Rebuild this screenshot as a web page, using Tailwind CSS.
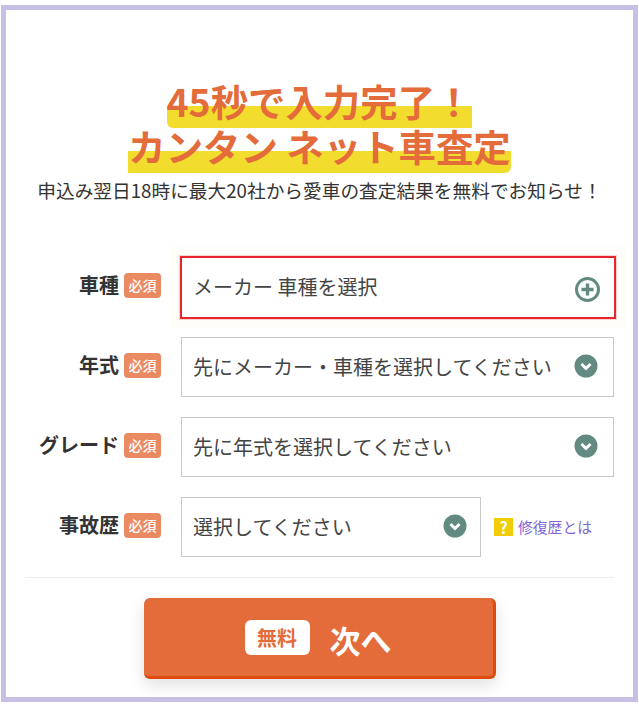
<!DOCTYPE html>
<html lang="ja">
<head>
  <meta charset="UTF-8" />
  <title>カンタン ネット車査定</title>
  <script src="https://cdn.jsdelivr.net/npm/@tailwindcss/browser@4"></script>
</head>
<body class="bg-white font-['Noto_Sans_CJK_JP','Noto_Sans',sans-serif] text-[#333]">

  <div class="ml-px mt-[5px] w-[637px] h-[697px] border-[5px] border-[#c8c0e4] bg-white">

    <!-- Heading -->
    <div class="pt-[69px] flex flex-col items-center">
      <h1 class="text-[37.4px] leading-[45px] font-bold text-[#e36c3a] text-center">
        <span class="bg-[linear-gradient(transparent_59%,#f2dc2e_59%)] rounded-[6px]">45秒で入力完了！<br>カンタン ネット車査定</span>
      </h1>
      <p class="text-[18.7px] leading-[26px] mt-[8px] text-[#333]">申込み翌日18時に最大20社から愛車の査定結果を無料でお知らせ！</p>
    </div>

    <!-- Form -->
    <div class="mt-[54px] flex flex-col gap-5">
      <div class="flex items-center h-[60px]">
        <div class="w-[155px] mb-1 flex justify-end items-center gap-[5px] text-[20px] font-bold">
          <span>車種</span>
          <span class="bg-[#e98a63] text-white text-[14px] leading-[25px] w-[37px] text-center rounded-[4px] font-medium">必須</span>
        </div>
        <div class="ml-[19px] w-[436px] h-[63px] -my-[2px] border-[2px] border-[#e8242c] shadow-[0_0_0_1px_rgba(232,36,44,0.2),0_0_0_10px_rgba(255,250,240,0.3)] flex items-center justify-between pl-[11px] pr-[14px] text-[20px] text-[#444]">
          <span>メーカー 車種を選択</span>
          <svg class="w-[25px] h-[25px] mt-1" viewBox="0 0 25 25" fill="none">
            <circle cx="12.500" cy="12.500" r="11" stroke="#638a80" stroke-width="3"/>
            <path d="M12.500 6.500v12M6.500 12.500h12" stroke="#638a80" stroke-width="3.400"/>
          </svg>
        </div>
      </div>

      <div class="flex items-center h-[60px]">
        <div class="w-[155px] mb-1 flex justify-end items-center gap-[5px] text-[20px] font-bold">
          <span>年式</span>
          <span class="bg-[#e98a63] text-white text-[14px] leading-[25px] w-[37px] text-center rounded-[4px] font-medium">必須</span>
        </div>
        <div class="ml-[20px] w-[433px] h-[60px] border border-[#c8c8c8] flex items-center justify-between pl-[11px] pr-[15px] text-[20px] text-[#444]">
          <span>先にメーカー・車種を選択してください</span>
          <svg class="w-[24px] h-[24px] mb-[2px]" viewBox="0 0 24 24" fill="none">
            <circle cx="12" cy="12" r="11.500" fill="#638a80"/>
            <path d="M7.500 10l4.500 4.500L16.500 10" stroke="#fff" stroke-width="3"/>
          </svg>
        </div>
      </div>

      <div class="flex items-center h-[60px]">
        <div class="w-[155px] mb-1 flex justify-end items-center gap-[5px] text-[20px] font-bold">
          <span>グレード</span>
          <span class="bg-[#e98a63] text-white text-[14px] leading-[25px] w-[37px] text-center rounded-[4px] font-medium">必須</span>
        </div>
        <div class="ml-[20px] w-[433px] h-[60px] border border-[#c8c8c8] flex items-center justify-between pl-[11px] pr-[15px] text-[20px] text-[#444]">
          <span>先に年式を選択してください</span>
          <svg class="w-[24px] h-[24px] mb-[2px]" viewBox="0 0 24 24" fill="none">
            <circle cx="12" cy="12" r="11.500" fill="#638a80"/>
            <path d="M7.500 10l4.500 4.500L16.500 10" stroke="#fff" stroke-width="3"/>
          </svg>
        </div>
      </div>

      <div class="flex items-center h-[60px]">
        <div class="w-[155px] mb-1 flex justify-end items-center gap-[5px] text-[20px] font-bold">
          <span>事故歴</span>
          <span class="bg-[#e98a63] text-white text-[14px] leading-[25px] w-[37px] text-center rounded-[4px] font-medium">必須</span>
        </div>
        <div class="ml-[20px] w-[300px] h-[60px] border border-[#c8c8c8] flex items-center justify-between pl-[11px] pr-[13px] text-[20px] text-[#444]">
          <span>選択してください</span>
          <svg class="w-[24px] h-[24px] mb-[2px]" viewBox="0 0 24 24" fill="none">
            <circle cx="12" cy="12" r="11.500" fill="#638a80"/>
            <path d="M7.500 10l4.500 4.500L16.500 10" stroke="#fff" stroke-width="3"/>
          </svg>
        </div>
        <div class="ml-[13px] flex items-center gap-[5px]">
          <span class="w-[19px] h-[18px] bg-[#f0cc00] text-white text-[16px] leading-[18px] font-bold text-center">?</span>
          <span class="text-[14.800px] text-[#7d68d8]">修復歴とは</span>
        </div>
      </div>
    </div>

    <!-- Footer -->
    <div class="mt-5 mx-[19px] border-t border-[#eeeeee] pt-5 flex justify-center">
      <button class="w-[352px] h-[81px] bg-[#e36c3a] rounded-[6px] border-r-[3px] border-b-[3px] border-[#e04a0a] shadow-[0_6px_16px_rgba(0,0,0,0.12)] flex items-center justify-center gap-5">
        <span class="bg-white text-[#e36c3a] text-[20px] leading-[35px] w-[65px] rounded-[6px] font-bold text-center">無料</span>
        <span class="text-white text-[31px] font-bold pt-[6px]">次へ</span>
      </button>
    </div>
  </div>

</body>
</html>
